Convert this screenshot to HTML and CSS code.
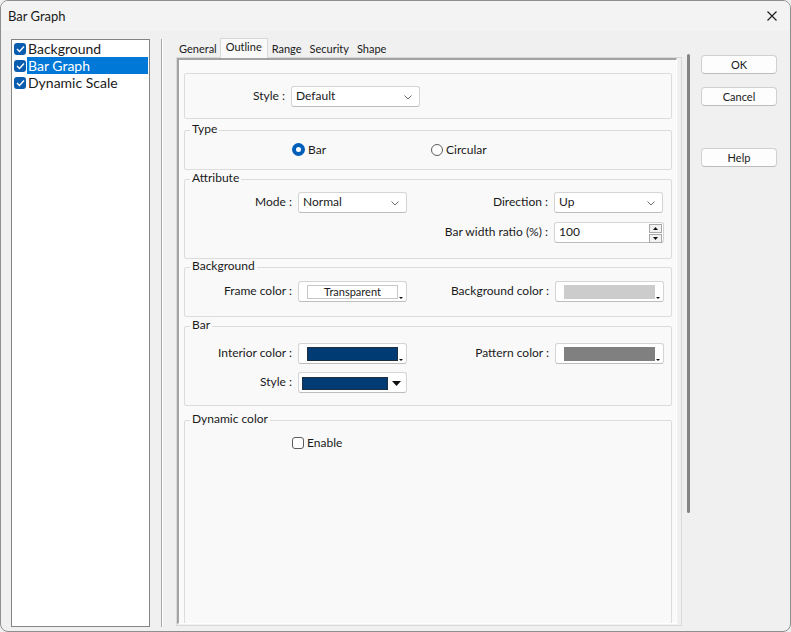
FILE: index.html
```html
<!DOCTYPE html>
<html lang="en-US">
  <head>
    <title>Bar Graph</title>
    <meta charset="UTF-8">
    <link rel="stylesheet" href="styles.css">
  </head>
  <body>
    <div class="window">
      <div class="titlebar">
        <span class="title">Bar Graph</span>
        <svg class="close" width="10" height="10" viewBox="0 0 10 10"><path d="M0.5 0.5 L9.5 9.5 M9.5 0.5 L0.5 9.5" stroke="#1a1a1a" stroke-width="1.1" fill="none"/></svg>
      </div>

      <div class="main">
        <!-- object tree -->
        <ul class="tree">
          <li class="node">
            <span class="tick"><svg width="9" height="8" viewBox="0 0 9 8"><path d="M1 4 L3.5 6.5 L8 1.5" stroke="#fff" stroke-width="1.4" fill="none"/></svg></span>
            <span class="node-text">Background</span>
          </li>
          <li class="node">
            <span class="tick"><svg width="9" height="8" viewBox="0 0 9 8"><path d="M1 4 L3.5 6.5 L8 1.5" stroke="#fff" stroke-width="1.4" fill="none"/></svg></span>
            <span class="node-text selected">Bar Graph</span>
          </li>
          <li class="node">
            <span class="tick"><svg width="9" height="8" viewBox="0 0 9 8"><path d="M1 4 L3.5 6.5 L8 1.5" stroke="#fff" stroke-width="1.4" fill="none"/></svg></span>
            <span class="node-text">Dynamic Scale</span>
          </li>
        </ul>

        <div class="splitter"></div>

        <!-- property sheet -->
        <div class="sheet">
          <div class="tabs">
            <span class="tab">General</span>
            <span class="tab active">Outline</span>
            <span class="tab">Range</span>
            <span class="tab">Security</span>
            <span class="tab">Shape</span>
          </div>
          <div class="panel">
            <div class="view">

              <div class="group g-style">
                <div class="row">
                  <span class="lbl w-style">Style :</span>
                  <span class="combo w-wide">Default
                    <svg class="chev" width="8" height="5" viewBox="0 0 8 5"><path d="M0.5 0.5 L4 4 L7.5 0.5" stroke="#6a6a6a" fill="none"/></svg>
                  </span>
                </div>
              </div>

              <div class="group g-type">
                <span class="caption">Type</span>
                <div class="row">
                  <span class="indent"></span>
                  <span class="choice w-choice"><span class="radio on"></span>Bar</span>
                  <span class="choice"><span class="radio"></span>Circular</span>
                </div>
              </div>

              <div class="group g-attr">
                <span class="caption">Attribute</span>
                <div class="row">
                  <span class="lbl w-col1">Mode :</span>
                  <span class="combo">Normal
                    <svg class="chev" width="8" height="5" viewBox="0 0 8 5"><path d="M0.5 0.5 L4 4 L7.5 0.5" stroke="#6a6a6a" fill="none"/></svg>
                  </span>
                  <span class="lbl w-col2">Direction :</span>
                  <span class="combo">Up
                    <svg class="chev" width="8" height="5" viewBox="0 0 8 5"><path d="M0.5 0.5 L4 4 L7.5 0.5" stroke="#6a6a6a" fill="none"/></svg>
                  </span>
                </div>
                <div class="row gap-9">
                  <span class="lbl w-col1"></span>
                  <span class="blank"></span>
                  <span class="lbl w-col2">Bar width ratio (%) :</span>
                  <span class="spin">100
                    <span class="spin-btns">
                      <span class="spin-btn"><svg width="5" height="3" viewBox="0 0 5 3"><path d="M0 3 L2.5 0 L5 3 Z" fill="#111"/></svg></span>
                      <span class="spin-btn"><svg width="5" height="3" viewBox="0 0 5 3"><path d="M0 0 L2.5 3 L5 0 Z" fill="#111"/></svg></span>
                    </span>
                  </span>
                </div>
              </div>

              <div class="group g-back">
                <span class="caption">Background</span>
                <div class="row">
                  <span class="lbl w-col1">Frame color :</span>
                  <span class="colorbtn">
                    <span class="swatch clear">Transparent</span>
                    <svg class="drop" width="4" height="2" viewBox="0 0 4 2"><path d="M0 0 L4 0 L2 2 Z" fill="#111"/></svg>
                  </span>
                  <span class="lbl w-col2b">Background color :</span>
                  <span class="colorbtn">
                    <span class="swatch light"></span>
                    <svg class="drop" width="4" height="2" viewBox="0 0 4 2"><path d="M0 0 L4 0 L2 2 Z" fill="#111"/></svg>
                  </span>
                </div>
              </div>

              <div class="group g-bar">
                <span class="caption">Bar</span>
                <div class="row">
                  <span class="lbl w-col1">Interior color :</span>
                  <span class="colorbtn">
                    <span class="swatch navy"></span>
                    <svg class="drop" width="4" height="2" viewBox="0 0 4 2"><path d="M0 0 L4 0 L2 2 Z" fill="#111"/></svg>
                  </span>
                  <span class="lbl w-col2b">Pattern color :</span>
                  <span class="colorbtn">
                    <span class="swatch grey"></span>
                    <svg class="drop" width="4" height="2" viewBox="0 0 4 2"><path d="M0 0 L4 0 L2 2 Z" fill="#111"/></svg>
                  </span>
                </div>
                <div class="row gap-8">
                  <span class="lbl w-col1">Style :</span>
                  <span class="colorbtn tall">
                    <span class="swatch navy pattern"></span>
                    <svg class="arrow" width="9" height="5" viewBox="0 0 9 5"><path d="M0 0 L9 0 L4.5 5 Z" fill="#111"/></svg>
                  </span>
                </div>
              </div>

              <div class="group g-dyn">
                <span class="caption">Dynamic color</span>
                <div class="row">
                  <span class="indent"></span>
                  <span class="choice"><span class="box"></span>Enable</span>
                </div>
              </div>

            </div>
          </div>
        </div>

        <div class="scroll"></div>

        <div class="actions">
          <button class="btn">OK</button>
          <button class="btn">Cancel</button>
          <button class="btn help">Help</button>
        </div>
      </div>
    </div>
  </body>
</html>
```

FILE: styles.css
```css
/* general formatting */
html,
body {
  margin: 0;
  padding: 0;
  background: #f0f0f0;
}
body {
  color: #1a1a1a;
  font-family: "Lato", "Liberation Sans", sans-serif;
  font-size: 12px;
}

.window {
  background: #f0f0f0;
  border: 1px solid #8e8e8e;
  border-radius: 8px;
  box-sizing: border-box;
  display: flex;
  flex-direction: column;
  height: 632px;
  overflow: hidden;
  width: 791px;
}

.titlebar {
  align-items: center;
  background: #f3f3f3;
  display: flex;
  height: 30px;
  padding-left: 7px;
}
.title {
  font-size: 13px;
}
.close {
  margin-left: auto;
  margin-right: 13px;
}

.main {
  align-items: flex-start;
  display: flex;
  padding: 8px 0 0 10px;
}

/* tree */
.tree {
  background: #fff;
  border: 1px solid #848484;
  box-sizing: border-box;
  height: 588px;
  list-style: none;
  margin: 0;
  padding: 0 1px 0 2px;
  width: 139px;
}
.node {
  align-items: center;
  display: flex;
  font-size: 14px;
  height: 17px;
}
.tick {
  align-items: center;
  background: #0a5cae;
  border-radius: 3px;
  display: inline-flex;
  height: 12px;
  justify-content: center;
  margin-right: 1px;
  width: 12px;
}
.node-text {
  flex: 1;
  line-height: 17px;
  padding-left: 1px;
}
.node-text.selected {
  background: #0078d7;
  color: #fff;
}

.splitter {
  border-left: 1px solid #a7a7a7;
  border-right: 1px solid #fff;
  height: 588px;
  margin-left: 11px;
}

/* tabs */
.sheet {
  display: flex;
  flex-direction: column;
  margin-left: 13px;
  width: 506px;
}
.tabs {
  align-items: flex-end;
  display: flex;
  height: 18px;
}
.tab {
  font-size: 11px;
  height: 16px;
  line-height: 15px;
  padding: 0 4px;
}
.tab:first-child {
  padding: 0 3px;
}
.tab.active {
  background: #f9f9f9;
  border: 1px solid #d9d9d9;
  border-bottom: 0;
  height: 19px;
  line-height: 16px;
  margin-bottom: -1px;
  padding: 0 5px;
  position: relative;
}

.panel {
  border: 1px solid #d9d9d9;
  box-sizing: border-box;
  height: 569px;
  padding: 0 4px 1px 0;
}
.view {
  background: #fafafa;
  border-color: #a3a3a3 #fff #fff #a3a3a3;
  border-style: solid;
  border-width: 2px 1px 1px 2px;
  box-sizing: border-box;
  height: 100%;
  overflow: hidden;
  padding: 13px 0 0 5px;
}

/* group boxes */
.group {
  background: #f9f9f9;
  border: 1px solid #dcdcdc;
  border-radius: 2px;
  box-sizing: border-box;
  position: relative;
  width: 488px;
}
.caption {
  background: #f9f9f9;
  left: 5px;
  line-height: 14px;
  padding: 0 2px;
  position: absolute;
  top: -9px;
}
.g-style {
  height: 46px;
  padding-top: 12px;
}
.g-type {
  height: 40px;
  margin-top: 11px;
  padding-top: 11px;
}
.g-attr {
  height: 80px;
  margin-top: 9px;
  padding-top: 12px;
}
.g-back {
  height: 50px;
  margin-top: 8px;
  padding-top: 13px;
}
.g-bar {
  height: 80px;
  margin-top: 9px;
  padding-top: 16px;
}
.g-dyn {
  height: 230px;
  margin-top: 14px;
  padding-top: 14px;
}

.row {
  align-items: center;
  display: flex;
}
.gap-8 {
  margin-top: 8px;
}
.gap-9 {
  margin-top: 9px;
}
.lbl {
  box-sizing: border-box;
  flex: none;
  padding-bottom: 2px;
  padding-right: 6px;
  text-align: right;
  white-space: nowrap;
}
.w-style {
  width: 106px;
}
.w-col1 {
  width: 113px;
}
.w-col2 {
  width: 147px;
}
.w-col2b {
  width: 148px;
}
.indent {
  flex: none;
  width: 107px;
}
.blank {
  width: 109px;
}

/* controls */
.combo,
.spin {
  align-items: center;
  background: #fff;
  border: 1px solid #d4d4d4;
  border-bottom-color: #bdbdbd;
  border-radius: 3px;
  box-sizing: border-box;
  display: flex;
  height: 21px;
  padding: 0 0 2px 4px;
  position: relative;
  width: 109px;
}
.combo.w-wide {
  width: 129px;
}
.chev {
  position: absolute;
  right: 7px;
  top: 8px;
}
.spin {
  width: 110px;
}
.spin-btns {
  display: flex;
  flex-direction: column;
  gap: 1px;
  position: absolute;
  right: 1px;
  top: 1px;
}
.spin-btn {
  align-items: center;
  background: #f2f2f2;
  border: 1px solid #a8a8a8;
  box-sizing: border-box;
  display: flex;
  height: 9px;
  justify-content: center;
  width: 13px;
}

.colorbtn {
  background: #fff;
  border: 1px solid #d4d4d4;
  border-bottom-color: #bdbdbd;
  border-radius: 3px;
  box-sizing: border-box;
  display: flex;
  height: 21px;
  padding: 3px 0 0 8px;
  position: relative;
  width: 109px;
}
.colorbtn.tall {
  padding: 4px 0 0 3px;
}
.swatch {
  box-sizing: border-box;
  height: 14px;
  width: 91px;
}
.swatch.clear {
  border: 1px solid #c6c6c6;
  font-size: 11px;
  line-height: 11px;
  text-align: center;
}
.swatch.light {
  background: #cccccc;
}
.swatch.navy {
  background: #003b73;
  border: 1px solid #1f2f40;
}
.swatch.grey {
  background: #808080;
}
.swatch.pattern {
  height: 13px;
  width: 86px;
}
.drop {
  bottom: 2px;
  position: absolute;
  right: 3px;
}
.arrow {
  position: absolute;
  right: 5px;
  top: 8px;
}

.choice {
  align-items: center;
  display: flex;
  padding-bottom: 1px;
}
.w-choice {
  width: 139px;
}
.radio {
  background: #fff;
  border: 1px solid #5c5c5c;
  border-radius: 50%;
  box-sizing: border-box;
  height: 12px;
  margin-right: 3px;
  width: 12px;
}
.radio.on {
  background: #005fb8;
  border: 4px solid #005fb8;
  height: 13px;
  position: relative;
  width: 13px;
}
.radio.on::after {
  background: #fff;
  border-radius: 50%;
  content: '';
  inset: 0;
  position: absolute;
}
.box {
  background: #fff;
  border: 1px solid #5c5c5c;
  border-radius: 3px;
  box-sizing: border-box;
  height: 12px;
  margin-right: 3px;
  width: 12px;
}

/* scroll indicator */
.scroll {
  background: #858585;
  border-radius: 2px;
  height: 459px;
  margin: 15px 0 0 5px;
  width: 3px;
}

/* dialog buttons */
.actions {
  display: flex;
  flex-direction: column;
  margin: 16px 0 0 11px;
}
.btn {
  background: #fdfdfd;
  border: 1px solid #d0d0d0;
  border-bottom-color: #bcbcbc;
  border-radius: 4px;
  color: #1a1a1a;
  font-family: inherit;
  font-size: 11px;
  height: 19px;
  margin-bottom: 13px;
  padding: 0 0 1px;
  width: 76px;
}
.btn.help {
  margin-top: 29px;
}
```
